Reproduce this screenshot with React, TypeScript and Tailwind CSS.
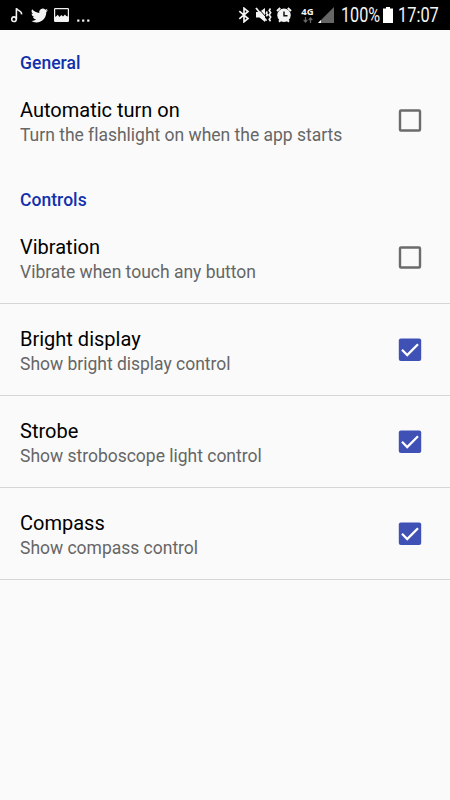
import { useState } from "react";
import clsx from "clsx";

type Preference = {
  id: string;
  title: string;
  summary: string;
};

const general: Preference[] = [
  {
    id: "auto",
    title: "Automatic turn on",
    summary: "Turn the flashlight on when the app starts",
  },
];

const controls: Preference[] = [
  { id: "vibration", title: "Vibration", summary: "Vibrate when touch any button" },
  { id: "bright", title: "Bright display", summary: "Show bright display control" },
  { id: "strobe", title: "Strobe", summary: "Show stroboscope light control" },
  { id: "compass", title: "Compass", summary: "Show compass control" },
];

function StatusBar() {
  return (
    <header className="flex h-[30px] items-center bg-black pl-[11px] text-[#f4f4f4]">
      {/* notifications */}
      <svg width="12" height="16" viewBox="0 0 12 16" fill="none" stroke="#f2f2f2" strokeWidth="1.6">
        <circle cx="3" cy="12.2" r="2.3" />
        <path d="M5.4 12.2V1.2C6.4 4.2 11 3.4 10.6 7.4" />
      </svg>
      <svg className="ml-2" width="17" height="17" viewBox="0 0 24 24" fill="#f4f4f4">
        <path d="M23.95 4.57a10 10 0 0 1-2.82.77 4.96 4.96 0 0 0 2.16-2.72 9.9 9.9 0 0 1-3.13 1.2 4.92 4.92 0 0 0-8.38 4.48A13.93 13.93 0 0 1 1.64 3.16a4.92 4.92 0 0 0 1.52 6.57 4.9 4.9 0 0 1-2.23-.61v.06a4.92 4.92 0 0 0 3.95 4.83 5 5 0 0 1-2.21.08 4.94 4.94 0 0 0 4.6 3.42A9.87 9.87 0 0 1 0 19.54a13.99 13.99 0 0 0 7.55 2.21c9.05 0 14-7.5 14-13.98l-.02-.64a9.94 9.94 0 0 0 2.42-2.56z" />
      </svg>
      <svg className="ml-[6px]" width="15" height="14" viewBox="0 0 15 14">
        <rect x="0.6" y="0.6" width="13.8" height="12.8" rx="0.6" fill="none" stroke="#f0f0f0" strokeWidth="1.2" />
        <path d="M1 13V9l1.500-1 1.300-1.200L5.500 9l1.800-2L9 8.500 11 6.500 12.200 8 14 8.500V13z" fill="#f4f4f4" />
      </svg>
      <svg className="ml-2" width="14" height="14" viewBox="0 0 14 14" fill="#f4f4f4">
        <rect y="11.5" x="0.2" width="2.2" height="2.2" />
        <rect y="11.5" x="5.1" width="2.2" height="2.2" />
        <rect y="11.5" x="10.2" width="2.2" height="2.2" />
      </svg>

      {/* system */}
      <div className="ml-auto flex h-full items-center pr-[10px]">
        <svg width="12" height="16" viewBox="0 0 12 16" fill="none" stroke="#f4f4f4" strokeWidth="1.7">
          <path d="M1.3 4.2 10 11.5 6 14.8V1.2l4 3.3-8.7 7.3" />
        </svg>
        <svg className="ml-[5px]" width="17" height="16" viewBox="0 0 17 16" fill="#f4f4f4">
          <path d="M1 5h3.500L10 1v14l-5.500-4.500H1z" />
          <path d="m2.500 0.500 9 10" stroke="#000" strokeWidth="1" />
          <path d="M1 1 11.500 13.800" stroke="#f4f4f4" strokeWidth="1.800" />
          <path d="m12.300 4.500-1 1.600 1.200 1.600-1.200 1.600M15.500 1.500l-1.300 2 1.500 2.200-1.500 2.200 1.500 2.200-1.500 2.200 1.300 2" fill="none" stroke="#f4f4f4" strokeWidth="1.600" />
        </svg>
        <svg className="ml-1" width="16" height="16" viewBox="0 0 16 16">
          <path d="m1 4 3.200-3M15 4l-3.200-3M3 14.800l2-2M13 14.800l-2-2" stroke="#f4f4f4" strokeWidth="2" />
          <circle cx="8" cy="8.200" r="6.700" fill="#f4f4f4" />
          <path d="M8 4.500v4.300h3.500" fill="none" stroke="#111" strokeWidth="1.500" />
        </svg>
        <div className="ml-2 flex h-4 w-[15px] flex-col items-center">
          <span className="h-[9px] font-['Open_Sans',sans-serif] text-[9.500px] leading-[9px] font-bold">4G</span>
          <svg className="mt-px" width="10" height="6" viewBox="0 0 10 6" fill="none" stroke="#666" strokeWidth="1.200">
            <path d="M2.500 0v5M0.700 3l1.800 2 1.800-2M7.500 6V1M5.700 3l1.800-2 1.800 2" />
          </svg>
        </div>
        <svg className="ml-[3px]" width="16" height="16" viewBox="0 0 16 16">
          <path d="M16 0v16H0z" fill="#666" />
          <path d="M3 13v3H0z" fill="#fff" />
        </svg>
        <span className="ml-[7px] w-[39px] origin-left scale-x-[0.83] pt-px text-[19.500px] leading-[30px] whitespace-nowrap">100%</span>
        <svg className="ml-[3px]" width="10" height="16" viewBox="0 0 10 16" fill="#fff">
          <path d="M3 0h4v1.500h3V16H0V1.500h3z" />
        </svg>
        <span className="ml-[5px] w-[42px] origin-left scale-x-[0.840] pt-px text-[19.500px] leading-[30px] whitespace-nowrap">17:07</span>
      </div>
    </header>
  );
}

function CategoryTitle({ children }: { children: string }) {
  return (
    <h2 className="h-[45px] px-5 pt-[21px] text-[17.500px] leading-6 font-medium tracking-[0.05px] text-[#1230ae]">
      {children}
    </h2>
  );
}

function CheckBox({ checked }: { checked: boolean }) {
  return (
    <svg className="mr-2" width="24" height="24" viewBox="0 0 24 24" fill="none">
      {checked ? (
        <>
          <rect x="0.800" y="0.500" width="22.400" height="22.400" rx="2" fill="#3f51b5" />
          <path d="m4 11.800 5.200 5.200L20 6.200" stroke="#fff" strokeWidth="2.300" />
        </>
      ) : (
        <rect x="2" y="1.500" width="20" height="20" rx="1" stroke="#6b6b6b" strokeWidth="2.400" />
      )}
    </svg>
  );
}

type RowProps = {
  item: Preference;
  checked: boolean;
  divider?: boolean;
  onToggle: (id: string) => void;
};

function PreferenceRow({ item, checked, divider, onToggle }: RowProps) {
  return (
    <button
      role="checkbox"
      aria-checked={checked}
      onClick={() => onToggle(item.id)}
      className={clsx(
        "flex h-[92px] w-full items-center justify-between border-b px-5 text-left",
        divider ? "border-[#d6d6d6]" : "border-transparent"
      )}
    >
      <span className="flex flex-col pt-[2px]">
        <span className="text-[20px] leading-[26px] text-black">{item.title}</span>
        <span className="text-[17.500px] leading-6 tracking-[-0.01px] text-[#666]">{item.summary}</span>
      </span>
      <CheckBox checked={checked} />
    </button>
  );
}

export default function App() {
  const [enabled, setEnabled] = useState<string[]>(["bright", "strobe", "compass"]);

  const toggle = (id: string) =>
    setEnabled((prev) => (prev.includes(id) ? prev.filter((p) => p !== id) : [...prev, id]));

  return (
    <div className="h-screen w-full overflow-hidden bg-[#fafafa] font-[Roboto,sans-serif]">
      <StatusBar />
      <main>
        <CategoryTitle>General</CategoryTitle>
        {general.map((item) => (
          <PreferenceRow key={item.id} item={item} checked={enabled.includes(item.id)} onToggle={toggle} />
        ))}

        <CategoryTitle>Controls</CategoryTitle>
        {controls.map((item) => (
          <PreferenceRow key={item.id} item={item} checked={enabled.includes(item.id)} divider onToggle={toggle} />
        ))}
      </main>
    </div>
  );
}
